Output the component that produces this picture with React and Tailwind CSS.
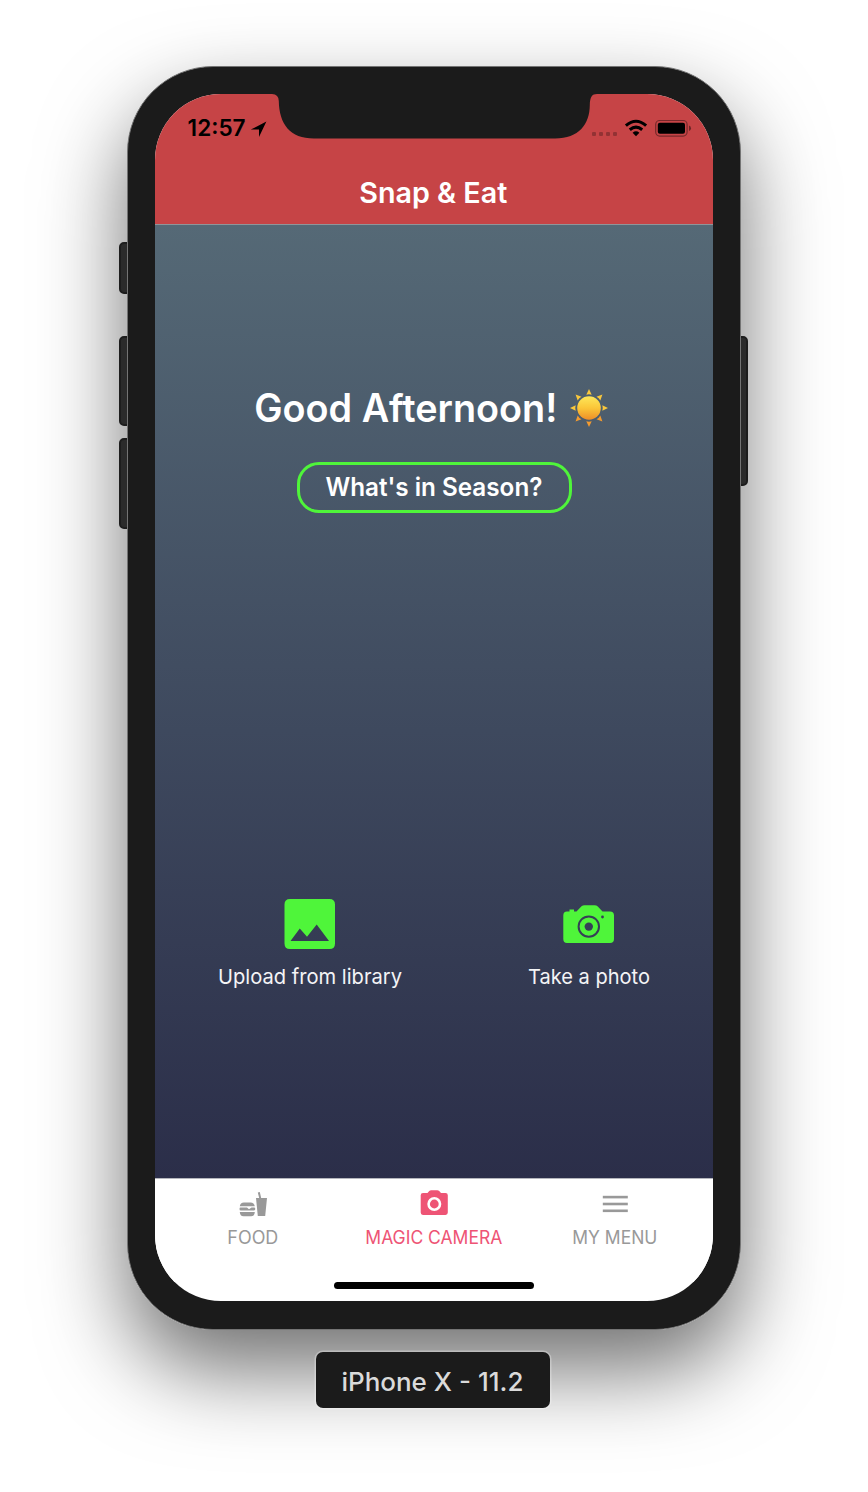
const font = 'font-[Inter,Roboto,sans-serif]';

function StatusBar() {
  return (
    <div className="flex h-[66px] items-start justify-between pl-8 pr-[21px]">
      <div className="flex items-center pt-[20px] text-black">
        <svg width="82" height="28" viewBox="187 114 82 28" className="overflow-visible">
          <text x="187.6" y="136.4" textLength="58" lengthAdjust="spacingAndGlyphs" fontSize="22.5" fontWeight="560" fontFamily="Inter">12:57</text>
          <path d="M266.4 121.5 L259 137 V129.6 H250.8 Z" />
        </svg>
      </div>
      <svg width="101" height="24" viewBox="591 116 101 24" className="mt-[22px]">
        <g fill="#000" opacity=".25">
          <rect x="592" y="132" width="4" height="4" rx="1" />
          <rect x="599" y="132" width="4" height="4" rx="1" />
          <rect x="606" y="132" width="4" height="4" rx="1" />
          <rect x="613" y="132" width="4" height="4" rx="1" />
        </g>
        <g fill="none" stroke="#000" strokeWidth="3.1">
          <path d="M625.9 125.6 Q636 116.9 646.1 125.6" />
          <path d="M629.8 129.8 Q636 124.6 642.2 129.8" />
        </g>
        <path d="M632.6 132.7 Q636 130 639.4 132.7 L636 136.2 Z" />
        <rect x="655.7" y="120.5" width="31.4" height="15.6" rx="4" fill="none" stroke="#000" strokeOpacity=".4" strokeWidth="1.2" />
        <rect x="657.8" y="122.8" width="27.2" height="11" rx="2" />
        <path d="M689 125.5 Q691 126 691 128.2 T689 131 Z" opacity=".45" />
      </svg>
    </div>
  );
}

function Label({ width, height, size, weight = 400, baseline, fill, x = 0, children }) {
  return (
    <svg width={width} height={height} className="block overflow-visible">
      <text x={x} y={baseline} textLength={width} lengthAdjust="spacingAndGlyphs" fontSize={size} fontWeight={weight} fontFamily="Inter, sans-serif" fill={fill}>{children}</text>
    </svg>
  );
}

function Sun() {
  const rays = [0, 45, 90, 135, 180, 225, 270, 315];
  return (
    <svg width="40" height="40" viewBox="-20 -20 40 40">
      <defs>
        <linearGradient id="sun" x1="0" y1="0" x2="0" y2="1">
          <stop offset="0" stopColor="#fde75a" />
          <stop offset=".5" stopColor="#fbc638" />
          <stop offset="1" stopColor="#ee8d28" />
        </linearGradient>
      </defs>
      {rays.map((r) => (
        <path key={r} d="M-2.7 -13.3 L0 -19 L2.7 -13.3 Q0 -14.2 -2.7 -13.3Z" transform={`rotate(${r})`} fill={r > 90 && r < 270 ? '#f39b2f' : '#fac83c'} />
      ))}
      <circle r="11.8" fill="url(#sun)" />
    </svg>
  );
}

function ImageIcon() {
  return (
    <svg width="51" height="50" viewBox="-0.5 0 51 50">
      <path fill="#4ff53a" fillRule="evenodd" d="M5.5 0H45Q50.5 0 50.5 5.5V44.5Q50.5 50 45 50H5.5Q0 50 0 44.5V5.5Q0 0 5.5 0ZM6 42H44.5L32.2 25.5L22.5 37.7L15.3 29.5Z" />
    </svg>
  );
}

function PhotoIcon() {
  return (
    <svg width="51" height="50" viewBox="563 899 51 50" className="overflow-visible">
      <path fill="#4ff53a" d="M567 911.5H569.5V909.5H574V911.5H576.5L581.5 906.3Q582.8 905.2 584.5 905.2H594.5Q596.5 905.2 597.8 906.4L602.5 911.5H610Q614 911.5 614 915.5V939Q614 943 610 943H567Q563.3 943 563.3 939V915.5Q563.3 911.5 567 911.5Z" />
      <circle cx="588.8" cy="926.6" r="10.2" fill="none" stroke="#363f57" strokeWidth="2" />
      <circle cx="588.8" cy="926.6" r="4.2" fill="#363f57" />
      <circle cx="602.5" cy="917" r="1.4" fill="#363f57" />
    </svg>
  );
}

function FoodIcon() {
  return (
    <svg width="30" height="28" viewBox="238 1190 30 28" fill="#999">
      <path d="M239.8 1206.2Q240.2 1202.4 244 1202.4H250.5Q254.2 1202.4 254.8 1206.2Z" />
      <path d="M240.6 1207.6H247L249 1209.2L251.5 1207.6H254Q255.3 1207.6 255.3 1209T254 1210.5H240.8Q239.5 1210.5 239.5 1209T240.6 1207.6Z" />
      <path d="M239.8 1212H254.8Q254.7 1216.2 251 1216.2H243.5Q240 1216.2 239.8 1212Z" />
      <path d="M257.8 1192.4L259.8 1192L261.2 1198.1H267L265.2 1216H257.8L256 1198.1H259.2Z" />
    </svg>
  );
}

function CameraIcon() {
  return (
    <svg width="28" height="28" viewBox="420 1190 28 28">
      <path fill="#ee5475" fillRule="evenodd" d="M423 1193H427.5L429.2 1191.1Q430 1190.2 431.2 1190.2H437.2Q438.4 1190.2 439.2 1191.1L441 1193H445.5Q447.8 1193 447.8 1195.3V1212.6Q447.8 1215 445.5 1215H423Q420.7 1215 420.7 1212.6V1195.3Q420.7 1193 423 1193ZM434.3 1197A7 7 0 1 0 434.3 1211A7 7 0 1 0 434.3 1197Z" />
      <circle cx="434.3" cy="1204" r="4.4" fill="#ee5475" />
    </svg>
  );
}

function MenuIcon() {
  return (
    <svg width="26" height="28" viewBox="0 0 26 28" fill="#999">
      <rect x=".8" y="5.8" width="25" height="2.6" />
      <rect x=".8" y="12.7" width="25" height="2.6" />
      <rect x=".8" y="19.5" width="25" height="2.6" />
    </svg>
  );
}

function Tab({ icon, label, width, color }) {
  return (
    <div className="flex w-[181px] flex-col items-center">
      {icon}
      <div className="mt-[9px]">
        <Label width={width} height={22} size={18} weight={390} x={-0.7} baseline={17.4} fill={color}>{label}</Label>
      </div>
    </div>
  );
}

const sideButton = 'absolute border-2 border-[#1d1d1d] bg-[#2b2b2b]';

export default function App() {
  return (
    <div className={`flex h-[1492px] w-[868px] flex-col items-center overflow-hidden bg-white pt-[66px] ${font}`}>
      <div className="relative h-[1264px] w-[614px] shrink-0 rounded-[86px] shadow-[0_40px_86px_rgba(0,0,0,0.56)]">
        <div className={`${sideButton} -left-2 top-[176px] h-[52px] w-3 rounded-l-[5px]`} />
        <div className={`${sideButton} -left-2 top-[270px] h-[90px] w-3 rounded-l-[5px]`} />
        <div className={`${sideButton} -left-2 top-[372px] h-[91px] w-3 rounded-l-[5px]`} />
        <div className={`${sideButton} -right-[7px] top-[270px] h-[150px] w-3 rounded-r-[5px]`} />
        <div className="relative h-full rounded-[86px] border border-[#747474] bg-[#1b1b1b] p-[27px]">
          <div className="relative flex h-[1207px] w-[558px] flex-col overflow-hidden rounded-[66px] bg-white">
            <header className="h-[131px] shrink-0 border-b border-[#8f959a] bg-[#c64446]">
              <StatusBar />
              <h1 className="flex justify-center pt-[16px]">
                <Label width={148} height={34} size={28.5} weight={570} x={-0.7} baseline={26.5} fill="#fff">Snap &amp; Eat</Label>
              </h1>
            </header>
            <main className="flex h-[953px] shrink-0 flex-col bg-linear-to-b from-[#556976] to-[#2b2e49] pt-[163px]">
              <div className="flex h-10 items-center pl-[100px]">
                <Label width={303} height={40} size={39} weight={570} x={-0.7} baseline={34.4} fill="#fff">Good Afternoon!</Label>
                <div className="ml-[11px]"><Sun /></div>
              </div>
              <button className="mt-[34px] flex h-[50.5px] w-[275px] items-center justify-center self-center rounded-[22px] border-[3px] border-[#4ff53a]">
                <Label width={217} height={32} size={25.5} weight={560} x={-0.6} baseline={25.3} fill="#fff">What's in Season?</Label>
              </button>
              <div className="mt-[386.5px] flex">
                <div className="flex w-[309.5px] flex-col items-center gap-[14px]">
                  <ImageIcon />
                  <Label width={184} height={28} size={20.5} weight={380} baseline={20.8} fill="#f4f4f6">Upload from library</Label>
                </div>
                <div className="flex w-[248.5px] flex-col items-center gap-[14px]">
                  <PhotoIcon />
                  <Label width={122} height={28} size={20.5} weight={380} baseline={20.8} fill="#f4f4f6">Take a photo</Label>
                </div>
              </div>
            </main>
            <nav className="flex h-[104px] shrink-0 justify-center border-t border-[#b5b6bd] bg-white pt-[11px]">
              <Tab icon={<FoodIcon />} label="FOOD" width={51} color="#999" />
              <Tab icon={<CameraIcon />} label="MAGIC CAMERA" width={137} color="#ee5475" />
              <Tab icon={<MenuIcon />} label="MY MENU" width={85} color="#999" />
            </nav>
            <div className="mx-auto h-[7px] w-[200px] shrink-0 rounded-full bg-black" />
          </div>
          <svg width="314" height="46" viewBox="277 93 314 46" className="absolute left-[149px] top-[26px] overflow-visible">
            <path fill="#1b1b1b" d="M270 93V94H272Q278.7 94.3 278.8 101C279.2 124 290 138.5 314 138.5H555C579 138.5 589.7 124 589.8 105C590 97 592 94 597 94H599V93Z" />
          </svg>
        </div>
      </div>
      <div className="z-10 mt-[22px] flex h-[56px] w-[234px] shrink-0 items-center justify-center rounded-[7px] bg-[#1b1b1b] shadow-[0_0_0_1.5px_rgba(255,255,255,0.3)] -translate-x-px">
        <Label width={182} height={34} size={25.5} weight={500} x={-0.6} baseline={27.5} fill="#dadada">iPhone X - 11.2</Label>
      </div>
    </div>
  );
}
